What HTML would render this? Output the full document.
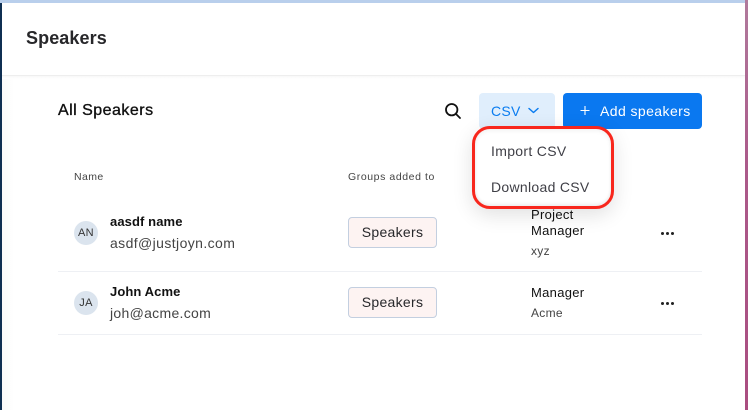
<!DOCTYPE html>
<html><head><meta charset="utf-8">
<style>
html,body{margin:0;padding:0}
body{width:748px;height:410px;position:relative;overflow:hidden;background:#fff;font-family:"Liberation Sans",sans-serif;color:#111}
.a{position:absolute;white-space:nowrap;line-height:1}
.tag{position:absolute;left:348px;width:87px;height:29px;background:#fdf3f2;border:1px solid #c3cfe0;border-radius:4px;text-align:center;line-height:29px;font-size:14px;letter-spacing:.3px;color:#27272a}
.av{position:absolute;left:74px;width:24px;height:24px;border-radius:50%;background:#dbe4ee;text-align:center;line-height:24px;font-size:11px;letter-spacing:.3px;color:#333}
.n{font-size:13px;font-weight:bold;color:#111;letter-spacing:.1px}
.e{font-size:14px;color:#444;letter-spacing:.4px}
.line{position:absolute;left:58px;width:644px;height:1px;background:#eef0f4}
.d{position:absolute;width:3px;height:3px;border-radius:50%;background:#222}
</style></head><body>
<div style="position:absolute;left:2px;top:76px;width:12px;height:334px;background:linear-gradient(90deg,#fafafa,#fff)"></div>
<div style="position:absolute;left:0;top:0;width:745px;height:3px;background:#b9cfec"></div>
<div style="position:absolute;left:0;top:3px;width:2px;height:407px;background:#0f2f52"></div>
<div style="position:absolute;left:745px;top:0;width:3px;height:410px;background:linear-gradient(#b07a9c,#ab5a8a 40%,#aa4d80)"></div>
<div style="position:absolute;left:2px;top:75px;width:743px;height:1px;background:#eeeeee"></div>
<div style="position:absolute;left:2px;top:76px;width:743px;height:3px;background:linear-gradient(#f8f8f8,#fff)"></div>

<div class="a" style="left:26px;top:29px;font-size:18px;font-weight:bold;color:#27272a;letter-spacing:.1px">Speakers</div>
<div class="a" style="left:58px;top:103px;font-size:16px;color:#111;letter-spacing:.48px;-webkit-text-stroke:.35px #111">All Speakers</div>

<svg style="position:absolute;left:444px;top:102px" width="18" height="18" viewBox="0 0 18 18" fill="none" stroke="#111" stroke-width="1.8" stroke-linecap="round"><circle cx="7.7" cy="7.7" r="5.7"/><path d="M12 12L16 16"/></svg>

<div style="position:absolute;left:479px;top:93px;width:76px;height:36px;background:#e0eefc;border-radius:4px"></div>
<div class="a" style="left:491px;top:104px;font-size:14px;color:#0a7cf0;letter-spacing:.3px">CSV</div>
<svg style="position:absolute;left:527px;top:106px" width="13" height="10" viewBox="0 0 13 10" fill="none" stroke="#0a7cf0" stroke-width="1.5" stroke-linecap="round" stroke-linejoin="round"><path d="M2 2.5L6.5 6.5L11 2.5"/></svg>

<div style="position:absolute;left:563px;top:93px;width:139px;height:36px;background:#0a78f0;border-radius:4px"></div>
<svg style="position:absolute;left:580px;top:105px" width="10" height="11" viewBox="0 0 10 11" fill="none" stroke="#fff" stroke-width="1.1"><path d="M5 1V10M.5 5.5H9.5"/></svg>
<div class="a" style="left:600px;top:104px;font-size:14px;color:#fff;letter-spacing:.42px">Add speakers</div>

<div class="a" style="left:74px;top:172px;font-size:10.5px;color:#444;letter-spacing:.4px">Name</div>
<div class="a" style="left:348px;top:172px;font-size:10.5px;color:#444;letter-spacing:.58px">Groups added to</div>

<div class="av" style="top:221px">AN</div>
<div class="a n" style="left:110px;top:215px">aasdf name</div>
<div class="a e" style="left:110px;top:236px">asdf@justjoyn.com</div>
<div class="tag" style="top:217px">Speakers</div>
<div class="a" style="left:531px;top:208px;font-size:13px;color:#111;letter-spacing:.3px">Project</div>
<div class="a" style="left:531px;top:224px;font-size:13px;color:#111;letter-spacing:.3px">Manager</div>
<div class="a" style="left:531px;top:245px;font-size:12px;color:#444;letter-spacing:.3px">xyz</div>
<div class="d" style="left:661px;top:232px"></div><div class="d" style="left:666px;top:232px"></div><div class="d" style="left:671px;top:232px"></div>
<div class="line" style="top:271px"></div>

<div class="av" style="top:291px">JA</div>
<div class="a n" style="left:110px;top:285px">John Acme</div>
<div class="a e" style="left:110px;top:306px;letter-spacing:.3px">joh@acme.com</div>
<div class="tag" style="top:287px">Speakers</div>
<div class="a" style="left:531px;top:286px;font-size:13px;color:#111;letter-spacing:.3px">Manager</div>
<div class="a" style="left:531px;top:307px;font-size:12px;color:#444;letter-spacing:.3px">Acme</div>
<div class="d" style="left:661px;top:302px"></div><div class="d" style="left:666px;top:302px"></div><div class="d" style="left:671px;top:302px"></div>
<div class="line" style="top:334px"></div>

<div style="position:absolute;left:472px;top:126px;width:136px;height:77px;border:3px solid #f8271d;border-radius:18px;background:#fff;box-shadow:0 6px 20px rgba(0,0,0,.12),inset 0 2px 4px rgba(0,0,0,.05),inset 0 -2px 3px rgba(0,0,0,.07)"></div>
<div class="a" style="left:491px;top:144px;font-size:14px;color:#3f3f46;letter-spacing:.32px">Import CSV</div>
<div class="a" style="left:491px;top:180px;font-size:14px;color:#3f3f46;letter-spacing:.3px">Download CSV</div>
</body></html>
